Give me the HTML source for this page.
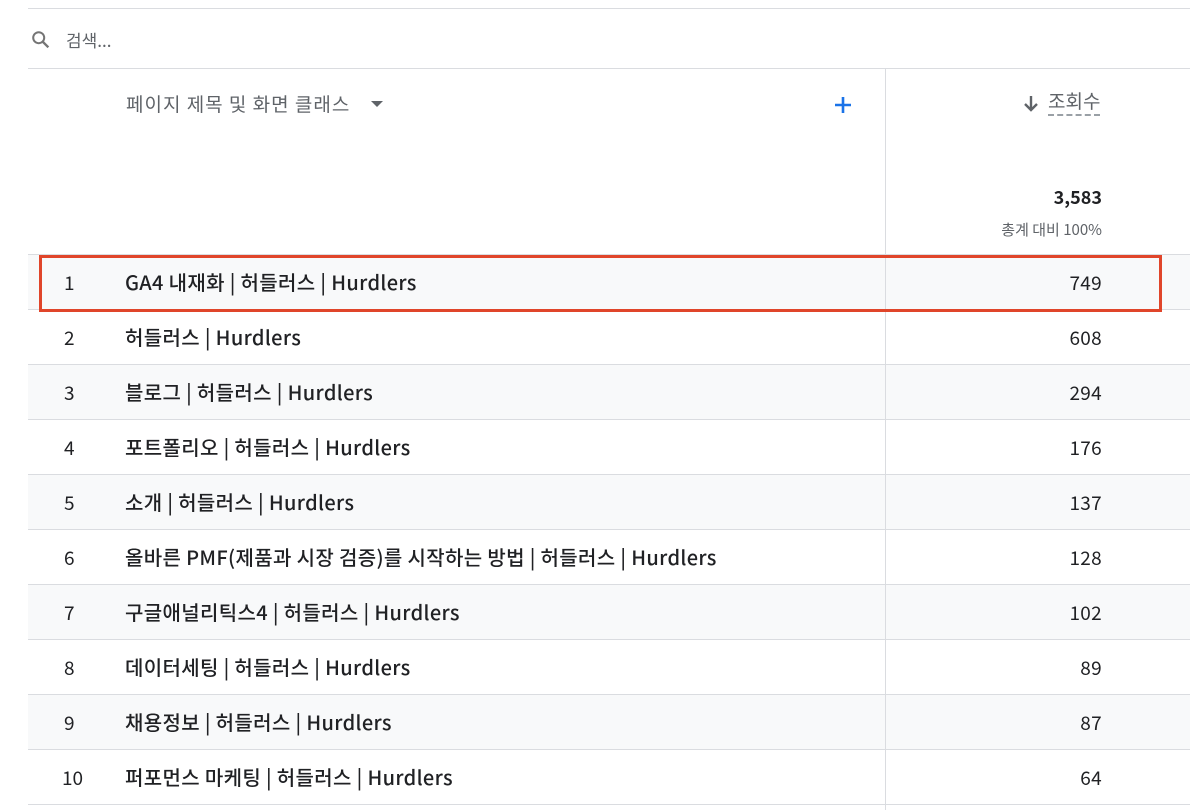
<!DOCTYPE html>
<html><head><meta charset="utf-8"><style>
*{margin:0;padding:0;box-sizing:border-box}
body{width:1190px;height:810px;background:#fff;font-family:"Noto Sans CJK KR","Liberation Sans",sans-serif;color:#202124;position:relative;overflow:hidden}
.abs{position:absolute;line-height:1}
.hl{position:absolute;left:28px;right:0;height:1px;background:#dadce0}
.row{position:absolute;left:28px;right:0;height:55px;border-bottom:1px solid #dadce0}
.row.g{background:#f8f9fa}
.row span{position:absolute;top:0;height:54px;display:flex;align-items:center;line-height:1;font-size:19px;color:#202124;white-space:nowrap}
.num{left:36px}
.tt{left:97px;font-weight:500;font-size:20px!important;letter-spacing:0.35px}
.val{right:88px;letter-spacing:0.3px}
</style></head><body>
<div class="hl" style="top:8px"></div>
<svg class="abs" style="left:30px;top:29px" width="22" height="22" viewBox="0 0 24 24"><circle cx="9.5" cy="9.5" r="6" fill="none" stroke="#757575" stroke-width="2.2"/><path d="M14 14l6 6" stroke="#757575" stroke-width="2.6"/></svg>
<div class="abs" style="left:66px;top:31px;font-size:17px;color:#5f6368">검색...</div>
<div class="hl" style="top:68px"></div>
<div class="abs" style="left:126px;top:94px;font-size:19px;color:#5f6368;letter-spacing:1px">페이지 제목 및 화면 클래스</div>
<svg class="abs" style="left:370px;top:100px" width="14" height="8"><path d="M1 1h12L7 7z" fill="#5f6368"/></svg>
<svg class="abs" style="left:833px;top:95px" width="20" height="20"><path d="M10 2v16M2 10h16" stroke="#1a73e8" stroke-width="2.6"/></svg>
<div class="abs" style="left:885px;top:68px;width:1px;height:742px;background:#dadce0;z-index:2"></div>
<svg class="abs" style="left:1022px;top:94px" width="18" height="20"><path d="M9 2v14M3 10l6 6 6-6" fill="none" stroke="#5f6368" stroke-width="2.4"/></svg>
<div class="abs" style="left:1048px;top:91px;font-size:19px;color:#5f6368;border-bottom:2px dashed #9aa0a6;padding-bottom:4px">조회수</div>
<div class="abs" style="right:88px;top:188px;font-size:18px;font-weight:700;color:#202124">3,583</div>
<div class="abs" style="right:88px;top:222px;font-size:15px;color:#5f6368">총계 대비 100%</div>
<div class="hl" style="top:254px"></div>
<div class="row g" style="top:255px"><span class="num">1</span><span class="tt">GA4 내재화 | 허들러스 | Hurdlers</span><span class="val">749</span></div>
<div class="row" style="top:310px"><span class="num">2</span><span class="tt">허들러스 | Hurdlers</span><span class="val">608</span></div>
<div class="row g" style="top:365px"><span class="num">3</span><span class="tt">블로그 | 허들러스 | Hurdlers</span><span class="val">294</span></div>
<div class="row" style="top:420px"><span class="num">4</span><span class="tt">포트폴리오 | 허들러스 | Hurdlers</span><span class="val">176</span></div>
<div class="row g" style="top:475px"><span class="num">5</span><span class="tt">소개 | 허들러스 | Hurdlers</span><span class="val">137</span></div>
<div class="row" style="top:530px"><span class="num">6</span><span class="tt">올바른 PMF(제품과 시장 검증)를 시작하는 방법 | 허들러스 | Hurdlers</span><span class="val">128</span></div>
<div class="row g" style="top:585px"><span class="num">7</span><span class="tt">구글애널리틱스4 | 허들러스 | Hurdlers</span><span class="val">102</span></div>
<div class="row" style="top:640px"><span class="num">8</span><span class="tt">데이터세팅 | 허들러스 | Hurdlers</span><span class="val">89</span></div>
<div class="row g" style="top:695px"><span class="num">9</span><span class="tt">채용정보 | 허들러스 | Hurdlers</span><span class="val">87</span></div>
<div class="row" style="top:750px"><span class="num" style="left:34px">10</span><span class="tt">퍼포먼스 마케팅 | 허들러스 | Hurdlers</span><span class="val">64</span></div>
<div class="abs" style="left:39px;top:255px;width:1123px;height:57px;border:3px solid #e0452a;z-index:3"></div>
</body></html>
